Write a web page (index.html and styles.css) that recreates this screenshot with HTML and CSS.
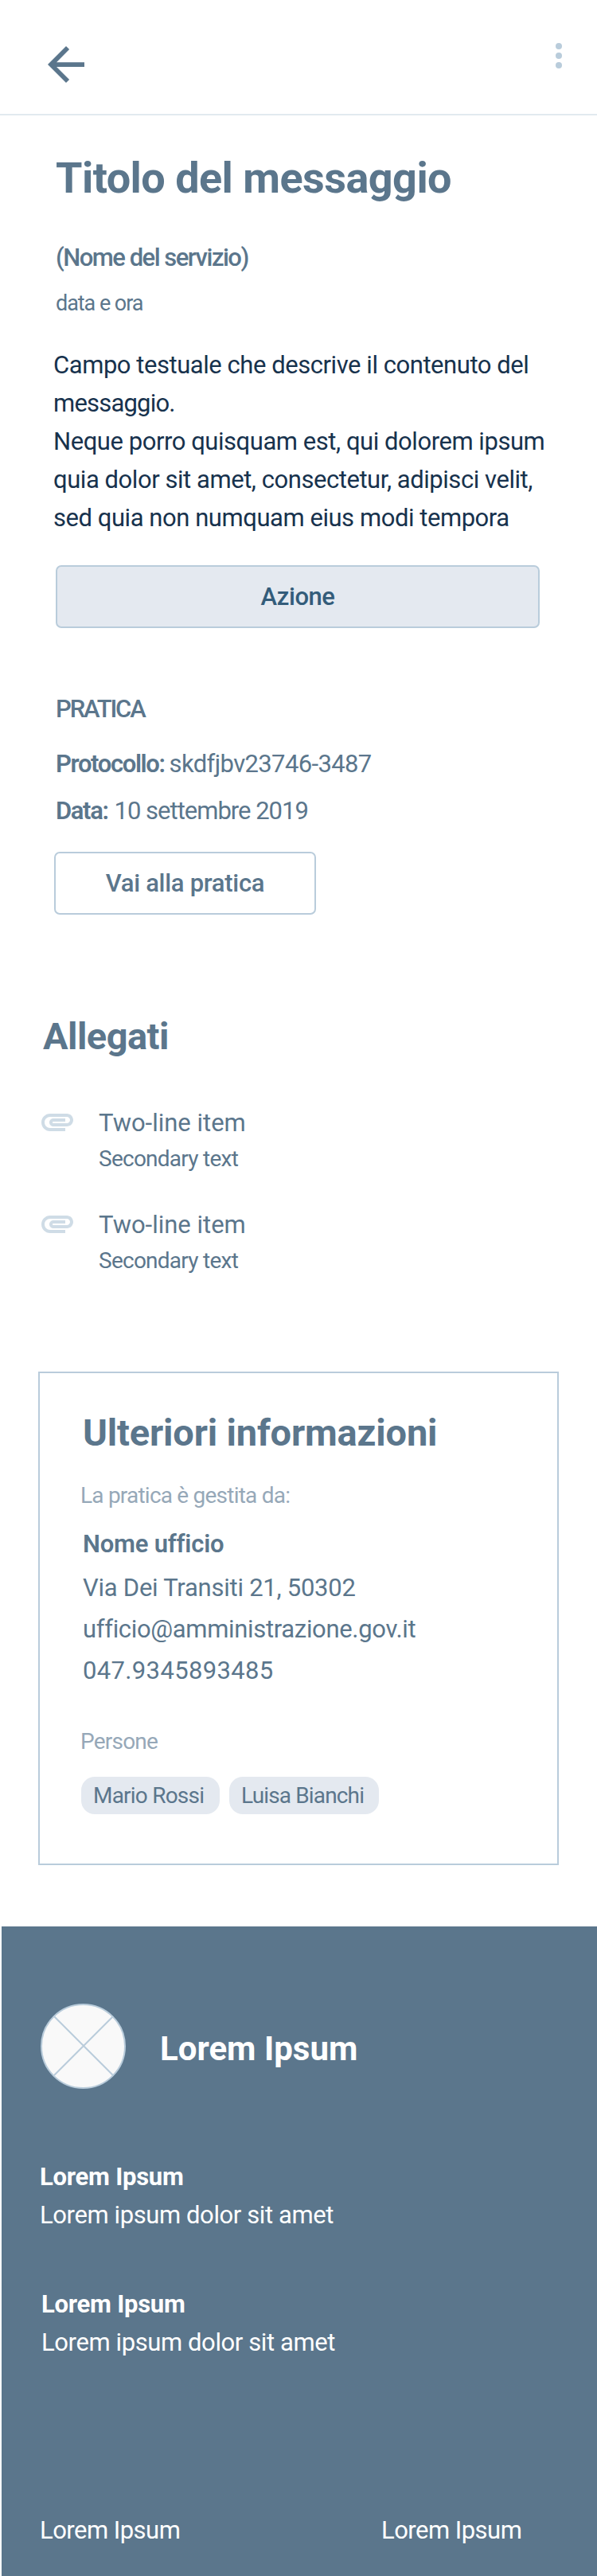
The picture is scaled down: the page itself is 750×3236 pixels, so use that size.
FILE: index.html
```html
<!DOCTYPE html>
<html lang="it">
<head>
<meta charset="utf-8">
<title>Messaggio</title>
<link rel="stylesheet" href="styles.css">
</head>
<body>
<header class="topbar">
  <svg class="back" viewBox="4 4 16 16"><path d="M20 11H7.83l5.59-5.59L12 4l-8 8 8 8 1.41-1.41L7.83 13H20v-2z"/></svg>
  <svg class="more" viewBox="0 0 8 32"><circle cx="4" cy="4" r="4"/><circle cx="4" cy="16" r="4"/><circle cx="4" cy="28" r="4"/></svg>
</header>
<main>
  <section class="message">
    <h1 class="title">Titolo del messaggio</h1>
    <p class="service">(Nome del servizio)</p>
    <p class="date">data e ora</p>
    <p class="body-text">Campo testuale che descrive il contenuto del<br><span class="wide">messaggio.</span><br>Neque porro quisquam est, qui dolorem ipsum<br>quia dolor sit amet, consectetur, adipisci velit,<br>sed quia non numquam eius modi tempora</p>
    <div class="btn btn-primary">Azione</div>
  </section>
  <section class="case">
    <h3 class="case-title">PRATICA</h3>
    <p class="row"><b class="key">Protocollo:</b><span class="code">skdfjbv23746-3487</span></p>
    <p class="row row-date"><b class="key">Data:</b><span class="day">10 settembre 2019</span></p>
    <div class="btn btn-outline">Vai alla pratica</div>
  </section>
  <section class="attachments">
    <h2 class="heading">Allegati</h2>
    <ul class="list">
      <li class="item">
        <svg class="clip" viewBox="2 7 20 11"><path d="M2 12.5C2 9.46 4.46 7 7.5 7H18c2.21 0 4 1.79 4 4s-1.79 4-4 4H9.5C8.12 15 7 13.88 7 12.5S8.12 10 9.5 10H17v2H9.41c-.55 0-.55 1 0 1H18c1.1 0 2-.9 2-2s-.9-2-2-2H7.5C5.57 9 4 10.57 4 12.5S5.57 16 7.5 16H17v2H7.5C4.46 18 2 15.54 2 12.5z"/></svg>
        <div><p class="item-title">Two-line item</p><p class="item-sub">Secondary text</p></div>
      </li>
      <li class="item">
        <svg class="clip" viewBox="2 7 20 11"><path d="M2 12.5C2 9.46 4.46 7 7.5 7H18c2.21 0 4 1.79 4 4s-1.79 4-4 4H9.5C8.12 15 7 13.88 7 12.5S8.12 10 9.5 10H17v2H9.41c-.55 0-.55 1 0 1H18c1.1 0 2-.9 2-2s-.9-2-2-2H7.5C5.57 9 4 10.57 4 12.5S5.57 16 7.5 16H17v2H7.5C4.46 18 2 15.54 2 12.5z"/></svg>
        <div><p class="item-title">Two-line item</p><p class="item-sub">Secondary text</p></div>
      </li>
    </ul>
  </section>
  <section class="card">
    <h2 class="heading card-heading">Ulteriori informazioni</h2>
    <p class="label label-office">La pratica è gestita da:</p>
    <p class="office">Nome ufficio</p>
    <p class="line address">Via Dei Transiti 21, 50302</p>
    <p class="line email">ufficio@amministrazione.gov.it</p>
    <p class="line phone">047.9345893485</p>
    <p class="label label-people">Persone</p>
    <div class="chips"><span class="chip">Mario Rossi</span><span class="chip chip-long">Luisa Bianchi</span></div>
  </section>
</main>
<footer class="footer">
  <div class="brand">
    <svg class="logo" viewBox="0 0 107 107"><circle cx="53.5" cy="53.5" r="52.5"/><path d="M17 16L91 90M91 16L17 90"/></svg>
    <h2 class="brand-name">Lorem Ipsum</h2>
  </div>
  <div class="info"><h3 class="info-title">Lorem Ipsum</h3><p class="info-text">Lorem ipsum dolor sit amet</p></div>
  <div class="info info-second"><h3 class="info-title">Lorem Ipsum</h3><p class="info-text">Lorem ipsum dolor sit amet</p></div>
  <nav class="links"><span>Lorem Ipsum</span><span>Lorem Ipsum</span></nav>
</footer>
</body>
</html>
```
FILE: styles.css
```css
* { box-sizing: border-box; }
body { margin: 0; background: #fff; color: #5b768c; font: 400 31px/40px Roboto, "Open Sans", sans-serif; font-kerning: normal; }
h1, h2, h3, p, ul { margin: 0; padding: 0; font-weight: inherit; font-size: inherit; white-space: nowrap; }
ul { list-style: none; }

.topbar { height: 145px; border-bottom: 2px solid #e2eaef; display: flex; justify-content: space-between; padding: 54px 44px 0 60px; }
.back { width: 46px; height: 46px; margin-top: 4px; fill: #5b768c; }
.more { width: 8px; height: 32px; fill: #b9ccdb; }

.message { padding: 47px 0 0 70px; }
.title { font-size: 54px; line-height: 64px; font-weight: 700; letter-spacing: -.55px; }
.service { margin-top: 48px; font-weight: 500; letter-spacing: -1.5px; }
.date { margin-top: 19px; font-size: 27px; line-height: 36px; letter-spacing: -1.05px; }
.body-text { margin: 36px 0 0 -3px; line-height: 48px; color: #17324d; letter-spacing: -.45px; }
.wide { letter-spacing: -.8px; }
.btn { height: 79px; border: 2px solid #b9ccdb; border-radius: 7px; display: flex; align-items: center; justify-content: center; font-weight: 500; }
.btn-primary { margin: 35px 0 0; width: 608px; background: #e4e9f0; color: #335c7a; letter-spacing: -.45px; }

.case { padding: 82px 0 0 70px; }
.case-title { font-weight: 500; letter-spacing: -2.1px; }
.row { margin-top: 29px; display: flex; }
.row-date { margin-top: 19px; }
.key { font-weight: 600; letter-spacing: -1.36px; }
.code { margin-left: 6px; letter-spacing: -.63px; }
.day { margin-left: 8px; letter-spacing: -1px; }
.btn-outline { margin: 31px 0 0 -2px; width: 329px; letter-spacing: -.3px; }

.attachments { padding: 125px 0 0 52px; }
.heading { font-size: 47px; line-height: 56px; font-weight: 700; letter-spacing: -.55px; margin-left: 2px; }
.list { margin-top: 61px; display: grid; gap: 45px; }
.item { display: flex; height: 83px; }
.clip { width: 40px; height: 22px; margin: 8px 32px 0 0; fill: #cfdce6; }
.item-title { letter-spacing: 0; }
.item-sub { margin-top: 7px; font-size: 28px; line-height: 36px; letter-spacing: -.75px; }

.card { margin: 121px 48px 0; height: 620px; border: 2px solid #b9ccdb; padding: 47px 0 0 54px; }
.card-heading { margin-left: 0; letter-spacing: -.17px; }
.label { margin-left: -3px; font-size: 28px; line-height: 36px; color: #96a8b8; letter-spacing: -.78px; }
.label-office { margin-top: 33px; }
.office { margin-top: 23px; font-weight: 600; letter-spacing: -.22px; }
.line { margin-top: 12px; }
.address { margin-top: 15px; letter-spacing: -.25px; }
.email { letter-spacing: -.33px; }
.phone { letter-spacing: .35px; }
.label-people { margin-top: 51px; }
.chips { margin: 26px 0 0 -2px; display: flex; gap: 12px; }
.chip { width: 174px; height: 47px; padding-left: 15px; border-radius: 17px; background: #e4e9f0; font-size: 28px; line-height: 48px; letter-spacing: -.78px; white-space: nowrap; }
.chip-long { width: 188px; letter-spacing: -.85px; }

.footer { margin: 77px 0 0 2px; height: 816px; padding: 97px 0 0 48px; background: #5b768c; color: #fff; }
.brand { display: flex; }
.logo { width: 107px; height: 107px; margin-left: 1px; fill: #f9f9f9; stroke: #b9ccdb; stroke-width: 2; }
.brand-name { margin: 32px 0 0 43px; font-size: 42px; line-height: 50px; font-weight: 700; letter-spacing: 0; }
.info { margin-top: 87px; line-height: 48px; }
.info-second { margin: 64px 0 0 2px; }
.info-title { font-weight: 700; letter-spacing: -.25px; }
.info-text { letter-spacing: -.4px; }
.links { margin-top: 188px; display: grid; grid-template-columns: 429px 1fr; line-height: 48px; letter-spacing: -.52px; }
```
